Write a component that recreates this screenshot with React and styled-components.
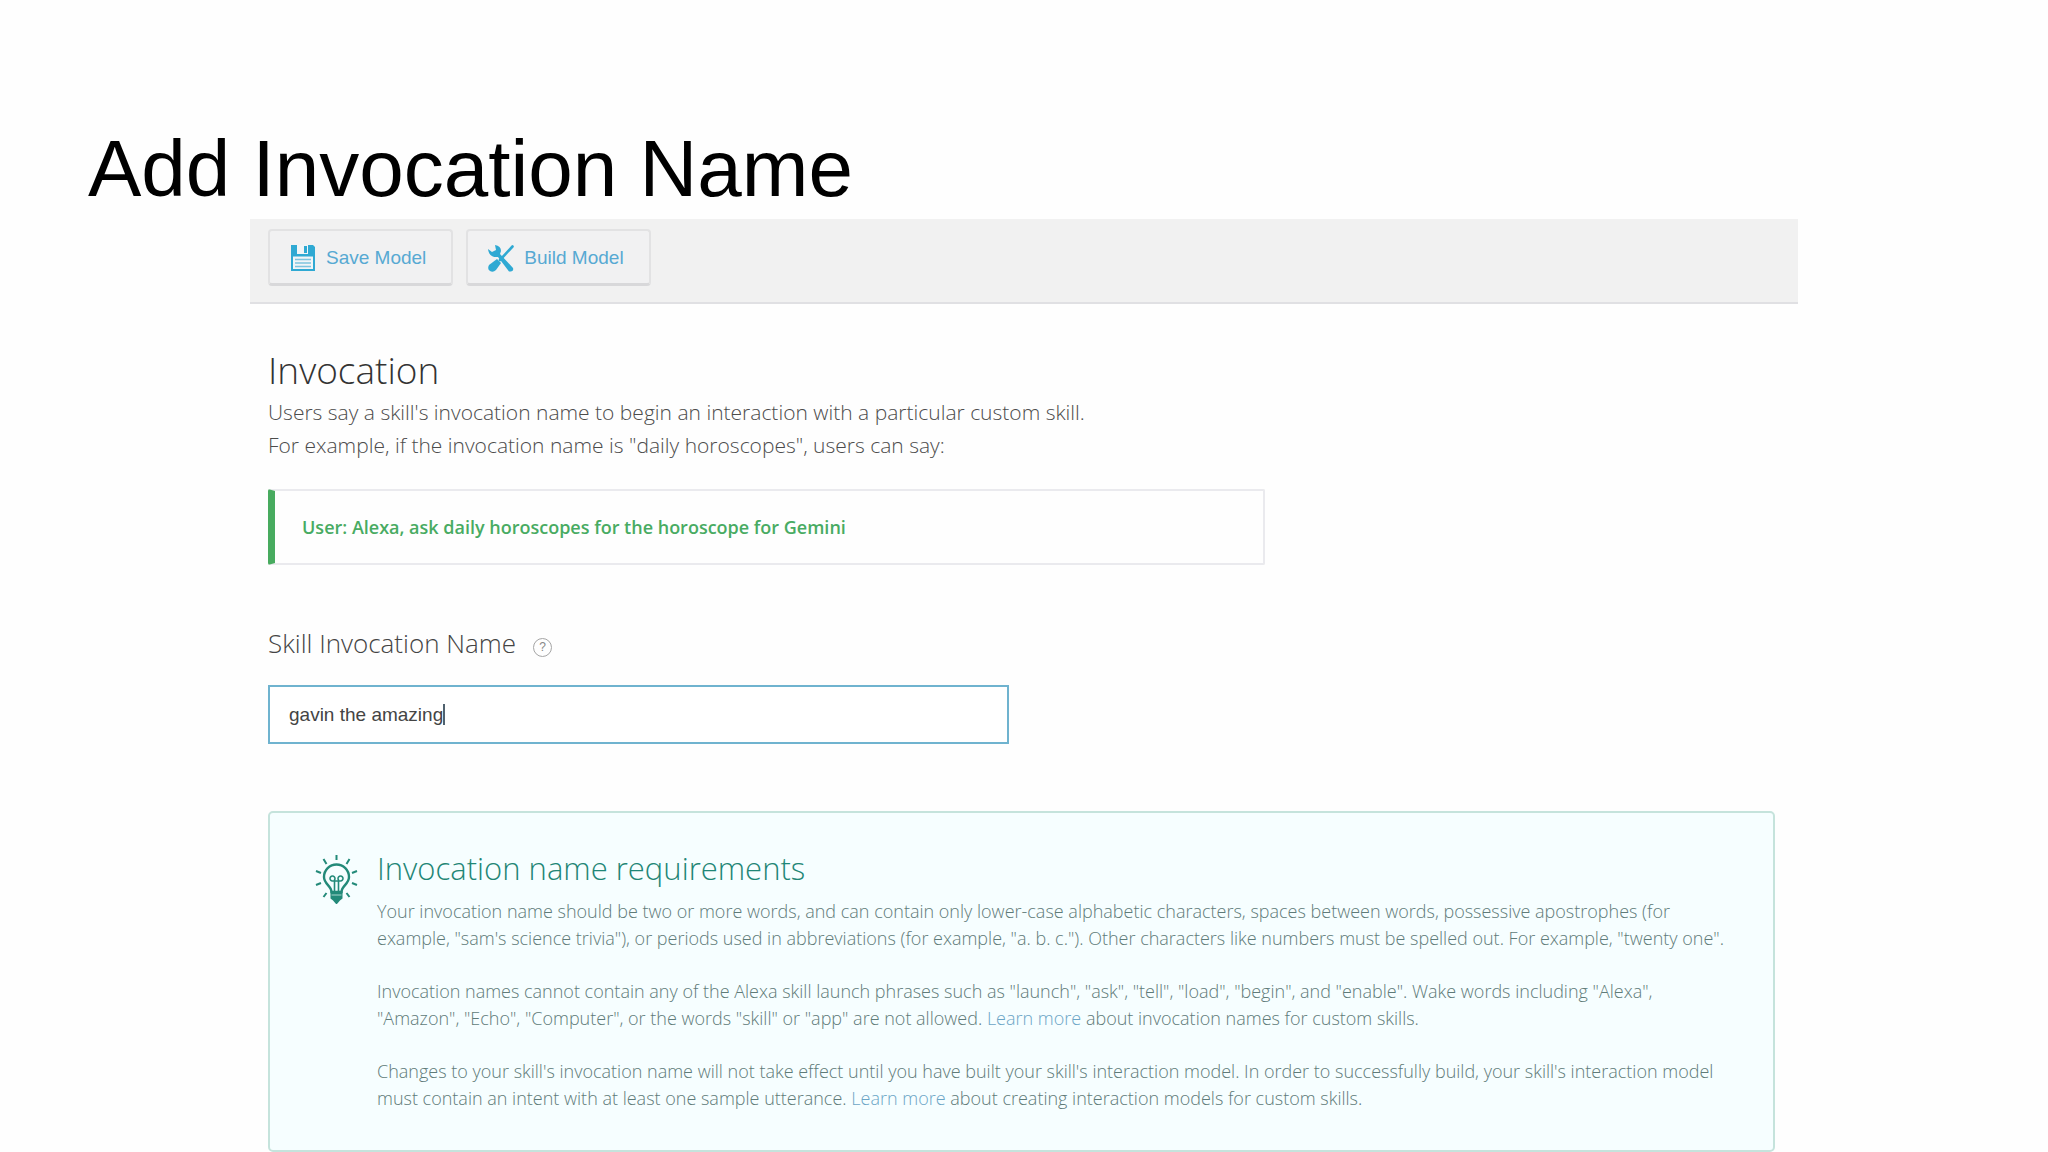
import React, { useState } from 'react';
import styled, { createGlobalStyle } from 'styled-components';

const SANS = "'Liberation Sans', Arial, sans-serif";
const EMBER = "'Open Sans', 'Noto Sans', sans-serif";

const INPUT_FONT = `400 19px ${SANS}`;
const INPUT_INSET = 21;

const GlobalStyle = createGlobalStyle`
  * {
    box-sizing: border-box;
  }

  body {
    margin: 0;
    background: #fefefe;
    font-family: ${EMBER};
    font-weight: 300;
  }

  h1, h2, h3, p {
    margin: 0;
    font-weight: inherit;
  }
`;

const Slide = styled.main`
  padding: 123px 250px 0;
`;

const Title = styled.h1`
  margin-left: -162px;
  padding-bottom: 4px;
  font: 400 80px/92px ${SANS};
  color: #000;
`;

const Toolbar = styled.div`
  display: flex;
  gap: 13px;
  padding: 10px 18px 16px;
  background: #f1f1f1;
  border-bottom: 2px solid #e0e0e3;
`;

const ToolButton = styled.button`
  display: flex;
  align-items: center;
  gap: 10px;
  height: 57px;
  padding: 1px 25px 0 20px;
  border: 2px solid #e2e2e3;
  border-bottom: 3px solid #d8d8da;
  border-radius: 4px;
  background: #f1f1f2;
  font: 400 19px/24px ${SANS};
  color: #57a9d3;
`;

const Content = styled.div`
  padding: 44px 23px 0 18px;
`;

const Heading = styled.h2`
  font-size: 37px;
  line-height: 44px;
  color: #333;
`;

const Intro = styled.p`
  padding: 4px 0 27px;
  font-size: 21px;
  line-height: 33px;
  color: #4c4c4c;
`;

const Example = styled.p`
  max-width: 997px;
  padding: 24px 27px;
  border: 2px solid #eaeaee;
  border-left: 7px solid #48ab5f;
  border-radius: 2px;
  font-size: 18px;
  line-height: 24px;
  font-weight: 600;
  color: #48ab62;
`;

const FieldHeader = styled.div`
  display: flex;
  align-items: center;
  gap: 17px;
  padding: 59px 0 23px;
`;

const Label = styled.label`
  font-size: 26px;
  line-height: 38px;
  color: #444;
`;

const Help = styled.button`
  width: 19px;
  height: 19px;
  margin-top: 8px;
  padding: 0;
  border: 1px solid #a5a5a5;
  border-radius: 50%;
  background: none;
  font: 400 12px/16px ${SANS};
  color: #888;
`;

const Field = styled.div`
  position: relative;
  max-width: 741px;
`;

const NameInput = styled.input`
  display: block;
  width: 100%;
  height: 59px;
  padding: 0 19px;
  border: 2px solid #6fb3cf;
  outline: none;
  background: #fff;
  font: ${INPUT_FONT};
  color: #444;
  caret-color: transparent;
`;

const Caret = styled.span`
  position: absolute;
  top: 19px;
  width: 2px;
  height: 21px;
  background: #50626e;
`;

const Requirements = styled.section`
  display: flex;
  gap: 18px;
  margin-top: 67px;
  padding: 35px 24px 38px 44px;
  border: 2px solid #c5e3dc;
  border-radius: 5px;
  background: #f6feff;
`;

const BulbIcon = styled.svg`
  flex: none;
  width: 45px;
  height: 50px;
  margin-top: 6px;
`;

const RequirementsTitle = styled.h3`
  font-size: 31px;
  line-height: 40px;
  color: #1f8676;
`;

const Rule = styled.p`
  padding-top: ${props => (props.$first ? '10px' : '26px')};
  font-size: 18px;
  line-height: 27px;
  color: #5f7b79;
  white-space: nowrap;
`;

const Link = styled.a`
  color: #6ba5c6;
  text-decoration: none;
`;

function SaveIcon() {
  return (
    <svg width="26" height="27" viewBox="0 0 26 27" aria-hidden="true">
      <path d="M1 1h22l2 2v24H1z" fill="#2fa9d3" />
      <path d="M7 1h11v9H7z" fill="#f1f5f7" />
      <path d="M14 2h3v7h-3z" fill="#2fa9d3" />
      <path d="M3 12.500h20V25H3z" fill="#f1f5f7" />
      <path d="M5 15.500h16M5 19h16M5 22.500h16" stroke="#7dc4de" strokeWidth="1.400" />
    </svg>
  );
}

function BuildIcon() {
  return (
    <svg width="26" height="28" viewBox="0 0 26 28" aria-hidden="true">
      <path d="M24.500 2.500L12 16" stroke="#2fa9d3" strokeWidth="2.600" strokeLinecap="round" />
      <path d="M9 15l4 4-5 7q-3 3-6 1t-1-6z" fill="#2fa9d3" />
      <path
        d="M0 5l4 3 4-2-1-5q6 1 6 6l-1 3 13 14q1 3-2 3.500h-2L10 13q-9 1-10-8z"
        fill="#2fa9d3"
      />
    </svg>
  );
}

function Bulb() {
  return (
    <BulbIcon viewBox="0 0 45 50" fill="none" stroke="#238a79" strokeWidth="2" aria-hidden="true">
      <path d="M22.500 1v5M9.500 5l3 5M35.500 5l-3 5M2 17l5 2M43 17l-5 2M2 31l5-2M43 31l-5-2M9.500 43l3-4M35.500 43l-3-4" />
      <path d="M17.500 38c0-6-7.500-8-7.500-15a12.500 12.500 0 0 1 25 0c0 7-7.500 9-7.500 15z" strokeWidth="2.400" />
      <path d="M20.500 38V26a2.500 2.500 0 1 0-2 1h8a2.500 2.500 0 1 0-2-1v12" strokeWidth="1.600" />
      <path d="M17.500 38h10v6l-2.500 2-2.500 3-2.500-3-2.500-2z" fill="#238a79" />
      <path d="M17.500 41h10" stroke="#a9d6cf" strokeWidth="1" />
    </BulbIcon>
  );
}

function textWidth(text) {
  const context = document.createElement('canvas').getContext('2d');
  context.font = INPUT_FONT;
  return Math.round(context.measureText(text).width);
}

export default function App() {
  const [name, setName] = useState('gavin the amazing');

  return (
    <Slide>
      <GlobalStyle />
      <Title>Add Invocation Name</Title>
      <Toolbar>
        <ToolButton type="button"><SaveIcon />Save Model</ToolButton>
        <ToolButton type="button"><BuildIcon />Build Model</ToolButton>
      </Toolbar>
      <Content>
        <Heading>Invocation</Heading>
        <Intro>
          Users say a skill's invocation name to begin an interaction with a particular custom skill.<br />
          For example, if the invocation name is "daily horoscopes", users can say:
        </Intro>
        <Example>User: Alexa, ask daily horoscopes for the horoscope for Gemini</Example>
        <FieldHeader>
          <Label htmlFor="invocation-name">Skill Invocation Name</Label>
          <Help type="button" aria-label="Help">?</Help>
        </FieldHeader>
        <Field>
          <NameInput
            id="invocation-name"
            value={name}
            onChange={e => setName(e.target.value)}
          />
          <Caret style={{ left: INPUT_INSET + textWidth(name) }} />
        </Field>
        <Requirements>
          <Bulb />
          <div>
            <RequirementsTitle>Invocation name requirements</RequirementsTitle>
            <Rule $first>
              Your invocation name should be two or more words, and can contain only lower-case alphabetic characters, spaces between words, possessive apostrophes (for<br />
              example, "sam's science trivia"), or periods used in abbreviations (for example, "a. b. c."). Other characters like numbers must be spelled out. For example, "twenty one".
            </Rule>
            <Rule>
              Invocation names cannot contain any of the Alexa skill launch phrases such as "launch", "ask", "tell", "load", "begin", and "enable". Wake words including "Alexa",<br />
              "Amazon", "Echo", "Computer", or the words "skill" or "app" are not allowed. <Link href="#names">Learn more</Link> about invocation names for custom skills.
            </Rule>
            <Rule>
              Changes to your skill's invocation name will not take effect until you have built your skill's interaction model. In order to successfully build, your skill's interaction model<br />
              must contain an intent with at least one sample utterance. <Link href="#models">Learn more</Link> about creating interaction models for custom skills.
            </Rule>
          </div>
        </Requirements>
      </Content>
    </Slide>
  );
}
